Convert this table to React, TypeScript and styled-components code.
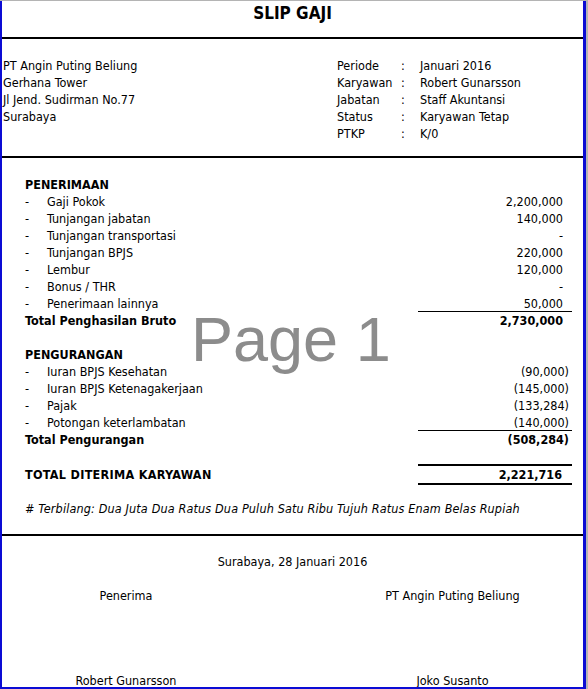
import React from 'react';
import styled, { createGlobalStyle } from 'styled-components';

const BLUE = '#0c0cd4';

const GlobalStyle = createGlobalStyle`
  html, body {
    margin: 0;
    padding: 0;
    background: #b4b4b4;
  }
  body {
    width: 588px;
    height: 689px;
    overflow: hidden;
    font-family: "DejaVu Sans Condensed", "DejaVu Sans", sans-serif;
    font-stretch: condensed;
  }
`;

const Sheet = styled.div`
  position: relative;
  box-sizing: border-box;
  width: 586px;
  height: 688px;
  margin-top: 1px;
  background: #fff;
  border-left: 2px solid ${BLUE};
  border-right: 3px solid ${BLUE};
  border-bottom: 2px solid ${BLUE};
  overflow: hidden;
  color: #000;
  font-size: 12.5px;
`;

const RowMarker = styled.div`
  position: absolute;
  left: -2px;
  top: 172px;
  width: 2px;
  height: 20px;
  background: #1e7145;
`;

const TitleBar = styled.div`
  box-sizing: border-box;
  height: 36px;
  padding-top: 2px;
  text-align: center;
  font-size: 17px;
  font-weight: bold;
  line-height: 20px;
`;

const Rule = styled.div`
  height: 2px;
  background: #000;
`;

const InfoSection = styled.div`
  display: flex;
  padding: 18px 0 14px 1px;
  line-height: 17px;
`;

const CompanyBlock = styled.div`
  width: 334px;
  display: flex;
  flex-direction: column;
`;

const MetaGrid = styled.div`
  display: grid;
  grid-template-columns: 64px 19px 1fr;
  grid-auto-rows: 17px;
`;

const Body = styled.div`
  padding: 18px 11px 17px 23px;
`;

const LineRow = styled.div<{ $bold?: boolean }>`
  display: grid;
  grid-template-columns: 22px 1fr 154px;
  height: 17px;
  line-height: 17px;
  font-weight: ${(p) => (p.$bold ? 'bold' : 'normal')};
  white-space: nowrap;
`;

const Label = styled.div<{ $span?: boolean }>`
  grid-column: ${(p) => (p.$span ? '1 / 3' : 'auto')};
`;

const Amount = styled.div<{ $neg?: boolean; $underline?: boolean }>`
  text-align: right;
  padding-right: ${(p) => (p.$neg ? 3 : 9)}px;
  box-shadow: ${(p) => (p.$underline ? 'inset 0 -1px 0 #000' : 'none')};
`;

const SectionTitle = styled.div`
  height: 17px;
  line-height: 17px;
  font-weight: bold;
`;

const Spacer = styled.div`
  height: 17px;
`;

const GrandRow = styled.div`
  display: grid;
  grid-template-columns: 1fr 154px;
  align-items: center;
  margin-top: 16px;
  font-weight: bold;
  line-height: 17px;
`;

const GrandLabel = styled.div`
  letter-spacing: 0.3px;
`;

const GrandAmount = styled.div`
  height: 17px;
  border-top: 2px solid #000;
  border-bottom: 2px solid #000;
  text-align: right;
  padding-right: 10px;
`;

const Terbilang = styled.div`
  margin-top: 15px;
  height: 17px;
  line-height: 17px;
  font-style: italic;
  letter-spacing: 0.15px;
  white-space: nowrap;
`;

const Footer = styled.div`
  padding-top: 17px;
  line-height: 17px;
`;

const DateLine = styled.div`
  text-align: center;
`;

const SignGrid = styled.div`
  display: grid;
  grid-template-columns: 248px 1fr;
  grid-template-rows: 17px 17px;
  column-gap: 72px;
  row-gap: 68px;
  margin-top: 17px;
  text-align: center;
`;

const Watermark = styled.div`
  position: absolute;
  left: 189px;
  top: 307px;
  font-family: "Liberation Sans", Arial, sans-serif;
  font-stretch: normal;
  font-size: 63px;
  line-height: 63px;
  color: #8c8c8c;
  pointer-events: none;
`;

type Item = { label: string; value: string; neg?: boolean };

const earnings: Item[] = [
  { label: 'Gaji Pokok', value: '2,200,000' },
  { label: 'Tunjangan jabatan', value: '140,000' },
  { label: 'Tunjangan transportasi', value: '-' },
  { label: 'Tunjangan BPJS', value: '220,000' },
  { label: 'Lembur', value: '120,000' },
  { label: 'Bonus / THR', value: '-' },
  { label: 'Penerimaan lainnya', value: '50,000' },
];

const deductions: Item[] = [
  { label: 'Iuran BPJS Kesehatan', value: '(90,000)', neg: true },
  { label: 'Iuran BPJS Ketenagakerjaan', value: '(145,000)', neg: true },
  { label: 'Pajak', value: '(133,284)', neg: true },
  { label: 'Potongan keterlambatan', value: '(140,000)', neg: true },
];

const meta: [string, string][] = [
  ['Periode', 'Januari 2016'],
  ['Karyawan', 'Robert Gunarsson'],
  ['Jabatan', 'Staff Akuntansi'],
  ['Status', 'Karyawan Tetap'],
  ['PTKP', 'K/0'],
];

const ItemList = ({ items }: { items: Item[] }) => (
  <>
    {items.map((it, i) => (
      <LineRow key={it.label}>
        <div>-</div>
        <Label>{it.label}</Label>
        <Amount $neg={it.neg} $underline={i === items.length - 1}>
          {it.value}
        </Amount>
      </LineRow>
    ))}
  </>
);

export default function App() {
  return (
    <>
      <GlobalStyle />
      <Sheet>
        <RowMarker />
        <TitleBar>SLIP GAJI</TitleBar>
        <Rule />
        <InfoSection>
          <CompanyBlock>
            <div>PT Angin Puting Beliung</div>
            <div>Gerhana Tower</div>
            <div>Jl Jend. Sudirman No.77</div>
            <div>Surabaya</div>
          </CompanyBlock>
          <MetaGrid>
            {meta.map(([k, v]) => (
              <React.Fragment key={k}>
                <div>{k}</div>
                <div>:</div>
                <div>{v}</div>
              </React.Fragment>
            ))}
          </MetaGrid>
        </InfoSection>
        <Rule />
        <Body>
          <SectionTitle>PENERIMAAN</SectionTitle>
          <ItemList items={earnings} />
          <LineRow $bold>
            <Label $span>Total Penghasilan Bruto</Label>
            <Amount>2,730,000</Amount>
          </LineRow>
          <Spacer />
          <SectionTitle>PENGURANGAN</SectionTitle>
          <ItemList items={deductions} />
          <LineRow $bold>
            <Label $span>Total Pengurangan</Label>
            <Amount $neg>(508,284)</Amount>
          </LineRow>
          <GrandRow>
            <GrandLabel>TOTAL DITERIMA KARYAWAN</GrandLabel>
            <GrandAmount>2,221,716</GrandAmount>
          </GrandRow>
          <Terbilang>
            # Terbilang: Dua Juta Dua Ratus Dua Puluh Satu Ribu Tujuh Ratus Enam Belas Rupiah
          </Terbilang>
        </Body>
        <Rule />
        <Footer>
          <DateLine>Surabaya, 28 Januari 2016</DateLine>
          <SignGrid>
            <div>Penerima</div>
            <div>PT Angin Puting Beliung</div>
            <div>Robert Gunarsson</div>
            <div>Joko Susanto</div>
          </SignGrid>
        </Footer>
        <Watermark>Page 1</Watermark>
      </Sheet>
    </>
  );
}
